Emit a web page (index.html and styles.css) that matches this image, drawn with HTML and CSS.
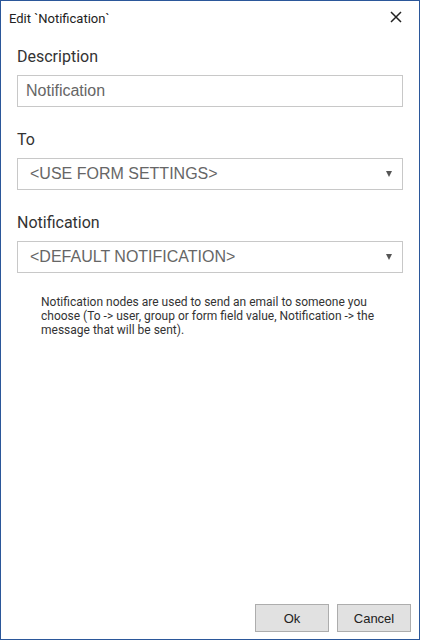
FILE: index.html
```html
<!DOCTYPE html>
<html>
<head>
<meta charset="utf-8">
<link rel="stylesheet" href="styles.css">
</head>
<body>
<div class="dialog">
  <div class="header">
    <span class="title">Edit `Notification`</span>
    <svg class="close" width="12" height="12" viewBox="0 0 12 12"><path d="M1 1L11 11M11 1L1 11" stroke="#222" stroke-width="1.5" fill="none"/></svg>
  </div>
  <div class="content">
    <div class="group">
      <div class="label">Description</div>
      <div class="field input">Notification</div>
    </div>
    <div class="group">
      <div class="label">To</div>
      <div class="field select"><span>&lt;USE FORM SETTINGS&gt;</span><span class="arrow"></span></div>
    </div>
    <div class="group">
      <div class="label">Notification</div>
      <div class="field select"><span>&lt;DEFAULT NOTIFICATION&gt;</span><span class="arrow"></span></div>
    </div>
    <p class="help">Notification nodes are used to send an email to someone you choose (To -&gt; user, group or form field value, Notification -&gt; the message that will be sent).</p>
  </div>
  <div class="footer">
    <button class="btn">Ok</button>
    <button class="btn">Cancel</button>
  </div>
</div>
</body>
</html>
```
FILE: styles.css
```css
html, body { margin: 0; padding: 0; background: #fff; }
.dialog {
  width: 420px;
  height: 640px;
  box-sizing: border-box;
  border: 1px solid #2b579a;
  display: flex;
  flex-direction: column;
  font-family: Roboto, "Liberation Sans", sans-serif;
  color: #333;
}
.header {
  height: 34px;
  display: flex;
  align-items: center;
  justify-content: space-between;
  padding: 0 17px 0 8px;
}
.title { font-size: 13px; color: #222; }
.close { display: block; margin-top: -2px; }
.content { padding: 12px 16px 0 16px; }
.group { margin-bottom: 23px; }
.label { font-size: 16px; line-height: 20px; margin-bottom: 8px; color: #333; }
.field {
  height: 32px;
  box-sizing: border-box;
  border: 1px solid #c8c8c8;
  display: flex;
  align-items: center;
  font-family: "Liberation Sans", Arial, sans-serif;
  font-size: 16px;
  color: #666;
}
.input { padding-left: 8px; }
.select { padding-left: 12px; padding-right: 10px; justify-content: space-between; }
.arrow {
  width: 0; height: 0;
  border-left: 3px solid transparent;
  border-right: 3px solid transparent;
  border-top: 6px solid #555;
}
.help {
  margin: -1px 16px 0 24px;
  font-size: 12px;
  line-height: 14px;
  color: #333;
}
.footer {
  margin-top: auto;
  display: flex;
  justify-content: flex-end;
  gap: 8px;
  padding: 0 8px 7px 0;
}
.btn {
  width: 74px;
  height: 28px;
  background: #e1e1e1;
  border: 1px solid #adadad;
  border-radius: 0;
  font-family: "Liberation Sans", Arial, sans-serif;
  font-size: 13px;
  color: #222;
  padding: 0;
}
```
